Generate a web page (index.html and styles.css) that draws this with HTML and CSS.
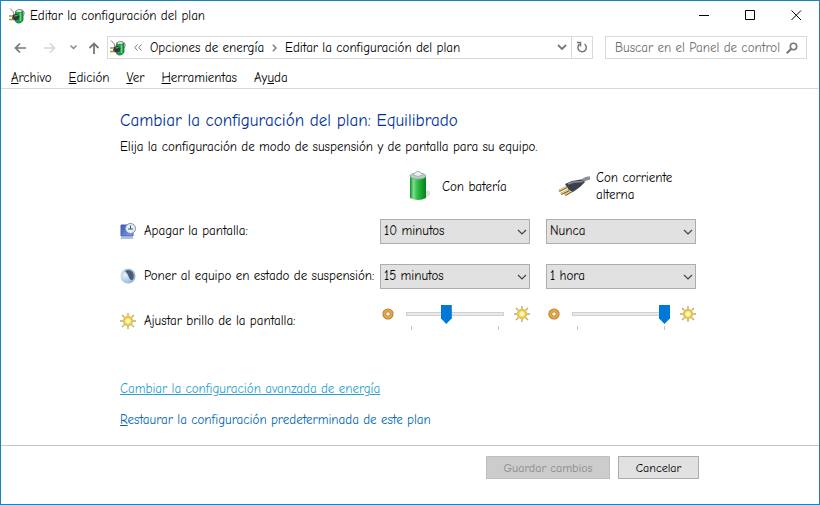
FILE: index.html
```html
<!DOCTYPE html>
<html lang="es">
<head>
<meta charset="utf-8">
<meta name="viewport" content="width=device-width, initial-scale=1">
<title>Editar la configuración del plan</title>
<link rel="stylesheet" href="styles.css">
</head>
<body>
<svg class="defs" width="0" height="0" aria-hidden="true">
  <defs>
    <linearGradient id="green" x1="0" x2="1" y1="0" y2="0">
      <stop offset="0" stop-color="#0f8f2a"/><stop offset=".22" stop-color="#7fdc8c"/><stop offset=".45" stop-color="#35bd4c"/><stop offset=".75" stop-color="#12a02c"/><stop offset="1" stop-color="#0a7d20"/>
    </linearGradient>
    <linearGradient id="blue" x1="0" x2="1" y1="0" y2="1">
      <stop offset="0" stop-color="#3b57b8"/><stop offset="1" stop-color="#7fa4f0"/>
    </linearGradient>
    <radialGradient id="moon" cx=".3" cy=".45" r=".75">
      <stop offset="0" stop-color="#e4f0f8"/><stop offset=".6" stop-color="#a9c9e0"/><stop offset="1" stop-color="#7fa3c4"/>
    </radialGradient>
    <radialGradient id="gold" cx=".5" cy=".5" r=".5">
      <stop offset=".3" stop-color="#fff6c0"/><stop offset=".65" stop-color="#f8dc50"/><stop offset="1" stop-color="#d0a030"/>
    </radialGradient>
    <symbol id="power" viewBox="0 0 16 16">
      <path d="M6.500 3.500Q10 1 14 3.500V12.500Q10 17 6.500 13.500Z" fill="#12a544" stroke="#2c5a3c" stroke-width=".8"/>
      <path d="M7.500 3.500Q10 2 12.500 3.500" fill="none" stroke="#e2e8e4" stroke-width="2"/>
      <path d="M11.500 5V13" stroke="#5fdc84" stroke-width="1.500"/>
      <path d="M6 3.500Q9 0 13.500 2Q16.500 4 14.500 8" fill="none" stroke="#888"/>
      <path d="M1 .5L4 3.500L5 6" fill="none" stroke="#777"/>
      <path d="M4 6.500L8 6L10.500 8.500L9.500 11.500L5 12.500L3 10.500Z" fill="#30383a"/>
      <path d="M5.500 8L8.500 7.500" stroke="#98a2a4"/>
      <path d="M0 8H4M0 11.500H4.500" stroke="#a8942c" stroke-width="1.600"/>
    </symbol>
    <symbol id="sun" viewBox="0 0 16 16">
      <path d="M8 0V3M8 13V16M0 8H3M13 8H16M2 2L4.500 4.500M11.500 11.500L14 14M14 2L11.500 4.500M4.500 11.500L2 14" stroke="#bfa878" stroke-width="1.400"/>
      <circle cx="8" cy="8" r="4.700" fill="url(#gold)" stroke="#e6c53c"/>
      <circle cx="8" cy="8" r="1.800" fill="#fffbe8"/>
    </symbol>
    <symbol id="ring" viewBox="0 0 12 12">
      <circle cx="6" cy="6" r="5.600" fill="#b87828"/>
      <circle cx="6" cy="6" r="4.800" fill="#e0a44c"/>
      <circle cx="6" cy="6" r="2.300" fill="#b87828"/>
      <circle cx="6" cy="6" r="1.800" fill="#fffaf0"/>
    </symbol>
    <symbol id="chevron" viewBox="0 0 10 6">
      <path d="M1 1L5 5L9 1" fill="none" stroke="currentColor" stroke-width="1.200"/>
    </symbol>
  </defs>
</svg>
<div class="window">
  <header class="titlebar">
    <svg class="icon16"><use href="#power"/></svg>
    <span class="title">Editar la configuración del plan</span>
    <button class="caption" aria-label="Minimizar"><svg width="11" height="11"><path d="M0 5.500H10" stroke="#000"/></svg></button>
    <button class="caption" aria-label="Maximizar"><svg width="11" height="11"><path d="M.5 .5H9.500V9.500H.5Z" fill="none" stroke="#000"/></svg></button>
    <button class="caption" aria-label="Cerrar"><svg width="11" height="11"><path d="M.5 .5L10 10M10 .5L.5 10" stroke="#000"/></svg></button>
  </header>

  <div class="navbar">
    <button class="nav" aria-label="Atrás"><svg width="12" height="12"><path d="M12 6H1.500M6 1.500L1.500 6L6 10.500" fill="none" stroke="#777" stroke-width="1.700"/></svg></button>
    <button class="nav" aria-label="Adelante"><svg width="12" height="12"><path d="M0 6H10.500M6 1.500L10.500 6L6 10.500" fill="none" stroke="#d6d6d6" stroke-width="1.500"/></svg></button>
    <button class="nav recent" aria-label="Recientes"><svg width="7" height="5"><path d="M.5 .5L3.500 3.500L6.500 .5" fill="none" stroke="#888" stroke-width="1.500"/></svg></button>
    <button class="nav up" aria-label="Subir"><svg width="12" height="12"><path d="M6 12V1.500M1.500 6L6 1.500L10.500 6" fill="none" stroke="#777" stroke-width="1.800"/></svg></button>
    <div class="address">
      <svg class="icon16"><use href="#power"/></svg>
      <svg class="sep" width="8" height="7"><path d="M3.500 .5L.8 3.500L3.500 6.500M7.500 .5L4.800 3.500L7.500 6.500" fill="none" stroke="#777"/></svg>
      <a class="crumb" href="#">Opciones de energía</a>
      <svg class="sep" width="5" height="8"><path d="M.8 .8L4 4L.8 7.200" fill="none" stroke="#777" stroke-width="1.400"/></svg>
      <a class="crumb" href="#">Editar la configuración del plan</a>
      <button class="drop" aria-label="Historial"><svg width="10" height="7"><path d="M1 1L5 5L9 1" fill="none" stroke="#777" stroke-width="1.800"/></svg></button>
      <button class="refresh" aria-label="Actualizar"><svg width="12" height="13"><path d="M8.500 3A4.200 4.200 0 1 1 3.500 3.200M1 1.500H4.500V5.500" fill="none" stroke="#777" stroke-width="1.500"/></svg></button>
    </div>
    <div class="search">
      <input type="text" aria-label="Buscar" placeholder="Buscar en el Panel de control">
      <svg width="12" height="12"><circle cx="7.500" cy="4.500" r="3.200" fill="none" stroke="#777" stroke-width="1.600"/><path d="M5.200 6.800L.8 11.200" stroke="#777" stroke-width="2"/></svg>
    </div>
  </div>

  <nav class="menubar">
    <a href="#"><u>A</u>rchivo</a>
    <a href="#"><u>E</u>dición</a>
    <a href="#"><u>V</u>er</a>
    <a href="#"><u>H</u>erramientas</a>
    <a href="#">Ay<u>u</u>da</a>
  </nav>

  <main>
    <h1>Cambiar la configuración del plan: Equilibrado</h1>
    <p>Elija la configuración de modo de suspensión y de pantalla para su equipo.</p>

    <form class="settings">
      <span></span>
      <div class="source">
        <svg width="32" height="32" viewBox="0 0 32 32">
          <path d="M20 30L28 25Q29 21 25 20Z" fill="#ddd"/>
          <path d="M8 6V28Q16 32 24 28V6Z" fill="url(#green)"/>
          <ellipse cx="16" cy="6" rx="8" ry="3" fill="#b9cfc6" stroke="#8fb59c"/>
          <path d="M11 5L14 2Q16 1 18 2L21 5Q16 8 11 5Z" fill="#eef1f5" stroke="#a7b0b8"/>
        </svg>
        <span>Con batería</span>
      </div>
      <div class="source">
        <svg width="32" height="32" viewBox="0 0 32 32">
          <path d="M24 11Q28 8 32 8" fill="none" stroke="#8b9099" stroke-width="3.500"/>
          <path d="M1 21L9 17M3 24L11 20M7 25L14 21" stroke="#806024" stroke-width="2.500"/>
          <path d="M1 20.500L9 16.500M3 23.500L11 19.500M7 24.500L14 20.500" stroke="#f1d591" stroke-width="1.300"/>
          <path d="M7 14L14 11L23 9.500L27 12L22 17L15 22L11 20Z" fill="#3b404b"/>
          <path d="M10 14L16 12L25 11.500" fill="none" stroke="#868d99" stroke-width="1.500"/>
        </svg>
        <span>Con corriente alterna</span>
      </div>

      <div class="label">
        <svg class="icon16" viewBox="0 0 16 16">
          <path d="M1 2H13V13H1Z" fill="url(#blue)" stroke="#4a60b4"/><path d="M1 15H13" stroke="#9aa8d0" stroke-width="1.500"/>
          <circle cx="10.500" cy="5.500" r="5" fill="#e8eef6" stroke="#7c90ac"/><path d="M10.500 2.500V6M8 6H13" fill="none" stroke="#44536c"/>
        </svg>
        <span id="l-screen">Apagar la pantalla:</span>
      </div>
      <div class="combo"><select aria-labelledby="l-screen"><option>10 minutos</option></select><svg class="arrow"><use href="#chevron"/></svg></div>
      <div class="combo"><select aria-labelledby="l-screen"><option>Nunca</option></select><svg class="arrow"><use href="#chevron"/></svg></div>

      <div class="label">
        <svg class="icon16" viewBox="0 0 16 16">
          <circle cx="8" cy="8" r="7.500" fill="url(#moon)"/>
          <path d="M5 3Q9 .5 12.500 4Q15 8 12.500 12Q11 12.500 9.500 10.500Q8 5.500 5 3Z" fill="#4a5d74"/>
        </svg>
        <span id="l-sleep">Poner al equipo en estado de suspensión:</span>
      </div>
      <div class="combo"><select aria-labelledby="l-sleep"><option>15 minutos</option></select><svg class="arrow"><use href="#chevron"/></svg></div>
      <div class="combo"><select aria-labelledby="l-sleep"><option>1 hora</option></select><svg class="arrow"><use href="#chevron"/></svg></div>

      <div class="label">
        <svg class="icon16"><use href="#sun"/></svg>
        <span id="l-bright">Ajustar brillo de la pantalla:</span>
      </div>
      <div class="bright">
        <svg class="dim"><use href="#ring"/></svg>
        <div class="slider"><input type="range" min="0" max="100" value="40" aria-labelledby="l-bright"><div class="ticks"></div></div>
        <svg class="icon16"><use href="#sun"/></svg>
      </div>
      <div class="bright">
        <svg class="dim"><use href="#ring"/></svg>
        <div class="slider"><input type="range" min="0" max="100" value="100" aria-labelledby="l-bright"><div class="ticks"></div></div>
        <svg class="icon16"><use href="#sun"/></svg>
      </div>
    </form>

    <div class="links">
      <a class="hover" href="#">Cam<u>b</u>iar la configuración avanzada de energía</a>
      <a href="#"><u>R</u>estaurar la configuración predeterminada de este plan</a>
    </div>
  </main>

  <footer>
    <button class="btn save" disabled>Guardar cambios</button>
    <button class="btn">Cancelar</button>
  </footer>
</div>
</body>
</html>
```
FILE: styles.css
```css
* { box-sizing: border-box; }

body {
  margin: 0;
  background: #fff;
  color: #000;
  font: 13px/18px "Comic Sans MS", "Comic Neue", cursive;
}

button, input, select { font: inherit; color: inherit; }
button { padding: 0; border: 0; background: none; }
svg { display: block; flex: none; }
a { color: inherit; text-decoration: none; }
.defs { position: absolute; }
.icon16 { width: 16px; height: 16px; }

.window {
  display: flex;
  flex-direction: column;
  min-height: 100vh;
  border: 1px solid #1883c0;
}

.titlebar {
  display: flex;
  align-items: center;
  height: 29px;
  padding-left: 8px;
}
.title { flex: 1; margin-left: 5px; }
.caption {
  display: grid;
  place-items: center;
  width: 46px;
  height: 29px;
}

.navbar {
  display: flex;
  align-items: center;
  margin-top: 6px;
  padding: 0 12px 0 4px;
}
.nav {
  display: grid;
  place-items: center;
  width: 30px;
  height: 23px;
}
.nav.recent { width: 16px; }
.nav.up { width: 26px; }

.address {
  display: flex;
  flex: 1;
  align-items: center;
  height: 23px;
  padding-left: 2px;
  border: 1px solid #d9d9d9;
}
.sep { margin: 0 8px; }
.drop {
  display: grid;
  place-items: center;
  width: 18px;
  height: 21px;
  margin-left: auto;
}
.refresh {
  display: grid;
  place-items: center;
  width: 21px;
  height: 21px;
  border-left: 1px solid #d9d9d9;
}
.search {
  display: flex;
  align-items: center;
  width: 202px;
  height: 23px;
  margin-left: 12px;
  padding: 0 8px 0 9px;
  border: 1px solid #d9d9d9;
}
.search input {
  flex: 1;
  min-width: 0;
  padding: 0;
  border: 0;
  outline: 0;
  background: none;
}
.search input::placeholder { color: #6d6d6d; opacity: 1; }

.menubar {
  display: flex;
  gap: 17px;
  margin-top: 9px;
  padding: 1px 10px;
  border-bottom: 1px solid #d9d9d9;
}

main { flex: 1; padding: 20px 24px 16px 119px; }
h1 {
  margin: 0;
  color: #003399;
  font-size: 17px;
  font-weight: 400;
  line-height: 24px;
}
p { margin: 5px 0 0; }

.settings {
  display: grid;
  grid-template-columns: 244px 150px 150px;
  grid-template-rows: 60px 30px 60px 30px;
  column-gap: 16px;
  align-items: center;
}
.source {
  display: flex;
  align-items: center;
  gap: 8px;
  padding-left: 22px;
  line-height: 17px;
}
.source + .source { padding-left: 12px; gap: 6px; }
.label { display: flex; align-items: center; gap: 8px; white-space: nowrap; }

.combo { position: relative; }
.combo select {
  display: block;
  appearance: none;
  width: 100%;
  height: 25px;
  padding: 0 20px 0 3px;
  border: 1px solid #adadad;
  border-radius: 0;
  background: #e1e1e1;
}
.arrow {
  position: absolute;
  top: 10px;
  right: 3px;
  width: 10px;
  height: 6px;
  color: #444;
  pointer-events: none;
}

.bright {
  display: flex;
  align-items: flex-start;
  align-self: start;
  gap: 10px;
  margin-top: -1px;
  padding-left: 2px;
}
.bright .icon16 { margin-top: 1px; }
.dim { width: 12px; height: 12px; margin: 3px 2px 0 0; }
.slider { flex: 1; }
.slider input {
  display: block;
  appearance: none;
  width: 100%;
  height: 19px;
  margin: 0;
  background:
    linear-gradient(#e7eaea, #e7eaea) 1px 8px / 96px 2px no-repeat,
    linear-gradient(#d0d0d0, #d0d0d0) 0 7px / 100% 4px no-repeat;
}
.slider input::-webkit-slider-thumb {
  appearance: none;
  width: 11px;
  height: 19px;
  background: #0078d7;
  clip-path: polygon(0 0, 100% 0, 100% 70%, 50% 100%, 0 70%);
}
.ticks {
  height: 4px;
  margin: 2px 5px 0;
  border: solid #c4c4c4;
  border-width: 0 1px;
}

.links {
  display: flex;
  flex-direction: column;
  align-items: flex-start;
  gap: 13px;
  margin-top: 44px;
  color: #0066b4;
}
.links .hover { color: #2a9fd0; text-decoration: underline; }

footer {
  display: flex;
  justify-content: flex-end;
  gap: 8px;
  padding: 10px 120px 25px 0;
  border-top: 1px solid #c8c8c8;
}
.btn {
  width: 81px;
  height: 23px;
  border: 1px solid #adadad;
  background: #e1e1e1;
  font-size: 12px;
}
.btn.save {
  width: 124px;
  border-color: #bfbfbf;
  background: #ccc;
  color: #8b8b8b;
}
```
